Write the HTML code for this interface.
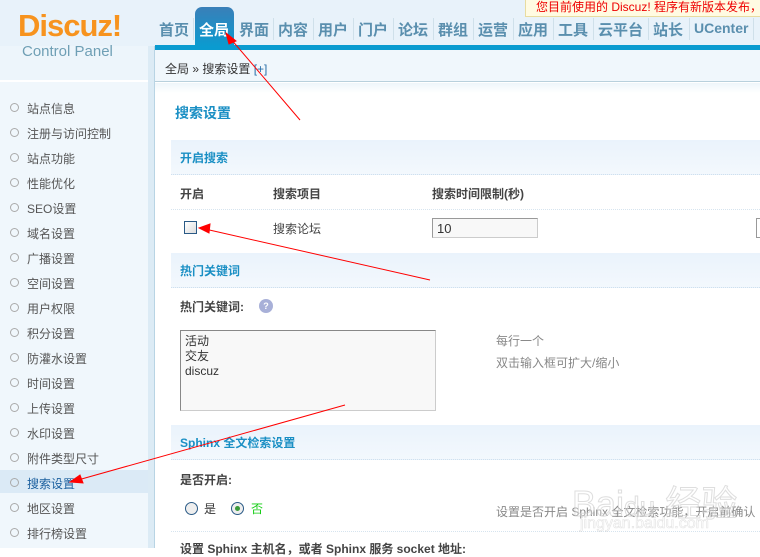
<!DOCTYPE html>
<html><head><meta charset="utf-8"><style>
*{margin:0;padding:0;box-sizing:border-box}
body{width:760px;height:548px;overflow:hidden;background:#fff;font-family:"Liberation Sans","Noto Sans CJK SC",sans-serif;font-size:12px;color:#333;position:relative}
.a{position:absolute;white-space:nowrap}
#hdr{left:0;top:0;width:760px;height:46px;background:#e8f2fa}
#blue{left:155px;top:45px;width:605px;height:5px;background:#0a9bd0}
#side{left:0;top:82px;width:148px;height:466px;background:#f0f7fc}
#sidetop{left:0;top:46px;width:148px;height:36px;background:#edf5fb;border-bottom:2px solid #fff}
#sbar{left:148px;top:46px;width:7px;height:502px;background:#dcebf5;border-right:1px solid #b8d4e4}
#crumb{left:155px;top:50px;width:605px;height:32px;background:#f0f7fc;border-bottom:1px solid #b8d0dc}
.nav{top:19px;font-size:15px;font-weight:bold;color:#5a8fae}
.sep{top:18px;width:1px;height:22px;background:#cfe0ea}
.si{left:10px;font-size:12px;color:#555}
.si:before{content:"";display:inline-block;width:7px;height:7px;border:1px solid #aaa;border-radius:50%;margin-right:8px;vertical-align:1px}
.sec{left:171px;width:589px;height:35px;background:linear-gradient(#eaf3fc,#f3f8fd);border-bottom:1px dotted #cfe0ee}
.sect{font-weight:bold;color:#1a8fc4;font-size:12px}
.b{font-weight:bold;color:#444}
.g{color:#888}
</style></head><body>
<div class="a" id="hdr"></div>
<div class="a" id="sidetop"></div>
<div class="a" style="left:18px;top:8px;font-size:31px;font-weight:bold;color:#f7931e;letter-spacing:-1px">Discuz!</div>
<div class="a" style="left:22px;top:43px;font-size:15px;color:#6f9fb5">Control Panel</div>
<div class="a" id="blue"></div>
<div class="a" style="left:195px;top:7px;width:39px;height:40px;background:linear-gradient(#3a7fb8,#0a9bd0);border-radius:7px 7px 0 0"></div>
<div class="a nav" style="left:159px">首页</div>
<div class="a nav" style="left:199px;color:#fff">全局</div>
<div class="a nav" style="left:239px">界面</div>
<div class="a nav" style="left:278px">内容</div>
<div class="a nav" style="left:318px">用户</div>
<div class="a nav" style="left:358px">门户</div>
<div class="a nav" style="left:398px">论坛</div>
<div class="a nav" style="left:438px">群组</div>
<div class="a nav" style="left:478px">运营</div>
<div class="a nav" style="left:518px">应用</div>
<div class="a nav" style="left:558px">工具</div>
<div class="a nav" style="left:598px">云平台</div>
<div class="a nav" style="left:653px">站长</div>
<div class="a nav" style="left:694px;font-size:14px;top:20px">UCenter</div>
<div class="a sep" style="left:193px"></div><div class="a sep" style="left:273px"></div><div class="a sep" style="left:313px"></div><div class="a sep" style="left:353px"></div><div class="a sep" style="left:393px"></div><div class="a sep" style="left:433px"></div><div class="a sep" style="left:473px"></div><div class="a sep" style="left:513px"></div><div class="a sep" style="left:553px"></div><div class="a sep" style="left:593px"></div><div class="a sep" style="left:648px"></div><div class="a sep" style="left:689px"></div><div class="a sep" style="left:753px"></div>
<div class="a" style="left:525px;top:0;width:240px;height:17px;background:#fffbe2;border:1px solid #e8dca0;border-top:0;color:#e00;font-size:12px;padding:0 0 0 10px;line-height:14px">您目前使用的 Discuz! 程序有新版本发布，</div>
<div class="a" id="side"></div>
<div class="a" style="left:0;top:470px;width:148px;height:23px;background:#dbeaf6"></div>
<div class="a" id="sbar"></div>
<div class="a" id="crumb"></div>
<div class="a" style="left:165px;top:60px;color:#333">全局 » 搜索设置 <span style="color:#2a6fa8">[+]</span></div>
<div class="a" style="left:155px;top:83px;width:605px;height:10px;background:linear-gradient(#eef5fa,#fff)"></div>
<div class="a si" style="top:100px">站点信息</div>
<div class="a si" style="top:125px">注册与访问控制</div>
<div class="a si" style="top:150px">站点功能</div>
<div class="a si" style="top:175px">性能优化</div>
<div class="a si" style="top:200px">SEO设置</div>
<div class="a si" style="top:225px">域名设置</div>
<div class="a si" style="top:250px">广播设置</div>
<div class="a si" style="top:275px">空间设置</div>
<div class="a si" style="top:300px">用户权限</div>
<div class="a si" style="top:325px">积分设置</div>
<div class="a si" style="top:350px">防灌水设置</div>
<div class="a si" style="top:375px">时间设置</div>
<div class="a si" style="top:400px">上传设置</div>
<div class="a si" style="top:425px">水印设置</div>
<div class="a si" style="top:450px">附件类型尺寸</div>
<div class="a si" style="top:475px;color:#1a5f9e">搜索设置</div>
<div class="a si" style="top:500px">地区设置</div>
<div class="a si" style="top:525px">排行榜设置</div>

<div class="a" style="left:175px;top:103px;font-size:14px;font-weight:bold;color:#1a8fc4">搜索设置</div>
<div class="a sec" style="top:140px"></div>
<div class="a sect" style="left:180px;top:149px">开启搜索</div>
<div class="a b" style="left:180px;top:185px">开启</div>
<div class="a b" style="left:273px;top:185px">搜索项目</div>
<div class="a b" style="left:432px;top:185px">搜索时间限制(秒)</div>
<div class="a" style="left:171px;top:209px;width:589px;border-top:1px dotted #d6e4ef"></div>
<div class="a" style="left:184px;top:221px;width:13px;height:13px;border:1px solid #2a5a86;background:linear-gradient(135deg,#fff,#ddd)"></div>
<div class="a" style="left:273px;top:220px;color:#444">搜索论坛</div>
<div class="a" style="left:432px;top:218px;width:106px;height:20px;border:1px solid #999;border-right-color:#ccc;border-bottom-color:#ccc;background:#f8f8f8;padding:2px 4px;font-size:13px">10</div>
<div class="a" style="left:756px;top:218px;width:10px;height:20px;border:1px solid #999"></div>
<div class="a sec" style="top:253px"></div>
<div class="a sect" style="left:180px;top:262px">热门关键词</div>
<div class="a b" style="left:180px;top:298px">热门关键词:</div>
<div class="a" style="left:259px;top:299px;width:14px;height:14px;border-radius:50%;background:#a8b0d8;color:#fff;font-size:9px;text-align:center;line-height:14px;font-weight:bold">?</div>
<div class="a" style="left:180px;top:330px;width:256px;height:81px;border:1px solid #888;border-right-color:#ccc;border-bottom-color:#ccc;background:#f8f8f8;padding:3px 4px;line-height:15px;color:#333">活动<br>交友<br>discuz</div>
<div class="a g" style="left:496px;top:332px">每行一个</div>
<div class="a g" style="left:496px;top:354px">双击输入框可扩大/缩小</div>
<div class="a sec" style="top:425px"></div>
<div class="a sect" style="left:180px;top:434px">Sphinx 全文检索设置</div>
<div class="a b" style="left:180px;top:471px">是否开启:</div>
<div class="a" style="left:185px;top:502px;width:13px;height:13px;border:1px solid #2a5a86;border-radius:50%;background:#eee"></div>
<div class="a" style="left:204px;top:500px">是</div>
<div class="a" style="left:231px;top:502px;width:13px;height:13px;border:1px solid #2a5a86;border-radius:50%;background:#eee"></div>
<div class="a" style="left:235px;top:506px;width:5px;height:5px;border-radius:50%;background:#3a9a3a"></div>
<div class="a" style="left:251px;top:500px;color:#1c1">否</div>
<div class="a g" style="left:496px;top:503px">设置是否开启 Sphinx 全文检索功能，开启前确认</div>
<div class="a" style="left:171px;top:531px;width:589px;border-top:1px dotted #d6e4ef"></div>
<div class="a b" style="left:180px;top:540px">设置 Sphinx 主机名，或者 Sphinx 服务 socket 地址:</div>
<div class="a" style="left:572px;top:475px;font-size:36px;color:rgba(255,255,255,0.3);-webkit-text-stroke:1px rgba(200,200,200,0.6)">Bai<span style="font-size:28px">du</span> 经验</div>
<div class="a" style="left:580px;top:515px;font-size:16px;color:rgba(255,255,255,0.2);-webkit-text-stroke:0.6px rgba(200,200,200,0.5)">jingyan.baidu.com</div>
<svg class="a" style="left:0;top:0" width="760" height="548">
<g stroke="#f00" stroke-width="1" fill="#f00">
<line x1="300" y1="120" x2="230" y2="38"/><polygon points="226,33 236,41 229,44"/>
<line x1="430" y1="280" x2="205" y2="229"/><polygon points="199,228 210,224 209,233"/>
<line x1="345" y1="405" x2="78" y2="480"/><polygon points="70,482 80,475 83,483"/>
</g></svg>
</body></html>
